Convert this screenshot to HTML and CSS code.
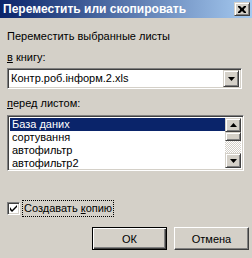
FILE: index.html
```html
<!DOCTYPE html>
<html lang="ru">
<head>
  <meta charset="UTF-8">
  <title>Переместить или скопировать</title>
  <link rel="stylesheet" href="styles.css">
</head>
<body>
  <div class="window">
    <div class="titlebar">
      <span class="title">Переместить или скопировать</span>
      <span class="close raised">
        <svg width="8" height="7" viewBox="0 0 8 7"><path d="M0 0h2l2 2 2-2h2v1l-2 2v1l2 2v1h-2l-2-2-2 2h-2v-1l2-2v-1l-2-2z" fill="#000"/></svg>
      </span>
    </div>
    <div class="content">
      <div class="caption">Переместить выбранные листы</div>
      <div class="label"><u>в</u> книгу:</div>
      <div class="combo sunken">
        <span class="combo-value">Контр.роб.інформ.2.xls</span>
        <span class="arrow-btn raised">
          <svg width="7" height="4" viewBox="0 0 7 4"><path d="M0 0h7L3.5 4z" fill="#000"/></svg>
        </span>
      </div>
      <div class="label"><u>п</u>еред листом:</div>
      <div class="list sunken">
        <ul class="items">
          <li class="selected">База даних</li>
          <li>сортування</li>
          <li>автофильтр</li>
          <li>автофильтр2</li>
        </ul>
        <div class="scrollbar">
          <span class="arrow-btn raised up">
            <svg width="7" height="4" viewBox="0 0 7 4"><path d="M0 4h7L3.5 0z" fill="#000"/></svg>
          </span>
          <span class="thumb raised"></span>
          <span class="track"></span>
          <span class="arrow-btn raised down">
            <svg width="7" height="4" viewBox="0 0 7 4"><path d="M0 0h7L3.5 4z" fill="#000"/></svg>
          </span>
        </div>
      </div>
      <div class="check-row">
        <span class="checkbox sunken">
          <svg width="7" height="7" viewBox="0 0 7 7"><path d="M0 2v3l2 2 5-5V0L2 5z" fill="#000"/></svg>
        </span>
        <span class="check-label">Создавать <u>к</u>опию</span>
      </div>
      <div class="buttons">
        <button class="btn default">ОК</button>
        <button class="btn">Отмена</button>
      </div>
    </div>
  </div>
</body>
</html>
```

FILE: styles.css
```css
/* classic dialog look */
body { margin: 0; background: #d4d0c8; font-family: "Liberation Sans", Arial, sans-serif; font-size: 11px; color: #000; }
.window { width: 252px; height: 258px; background: #d4d0c8; overflow: hidden; display: flex; flex-direction: column; }

.titlebar { flex: none; height: 18px; display: flex; align-items: center; justify-content: space-between; padding: 0 2px 0 3px; background: linear-gradient(to right, #0a246a, #a6caf0); }
.title { color: #fff; font-weight: bold; font-size: 12px; white-space: nowrap; }
.close { width: 16px; height: 14px; display: flex; align-items: center; justify-content: center; background: #d4d0c8; box-sizing: border-box; }

.raised { border: 1px solid; border-color: #d4d0c8 #404040 #404040 #d4d0c8; box-shadow: inset 1px 1px #fff, inset -1px -1px #808080; background: #d4d0c8; box-sizing: border-box; }
.sunken { border: 1px solid; border-color: #808080 #fff #fff #808080; box-shadow: inset 1px 1px #404040, inset -1px -1px #d4d0c8; background: #fff; box-sizing: border-box; }

.content { flex: 1; display: flex; flex-direction: column; align-items: flex-start; padding: 0 0 8px 7px; }
.caption { margin-top: 12px; line-height: 13px; }
.label { margin-top: 8px; line-height: 13px; }

.combo { flex: none; margin-top: 4px; width: 235px; height: 21px; display: flex; align-items: center; justify-content: space-between; padding: 2px; }
.combo-value { padding-left: 1px; line-height: 13px; }
.combo .arrow-btn { width: 16px; height: 17px; }

.arrow-btn { display: flex; align-items: center; justify-content: center; }

.list { flex: none; margin-top: 5px; width: 237px; height: 56px; display: flex; padding: 2px; }
.items { list-style: none; margin: 0; padding: 0; flex: 1; }
.items li { height: 13px; line-height: 13px; padding-left: 2px; }
.items .selected { background: #0a246a; color: #fff; }

.scrollbar { width: 16px; display: flex; flex-direction: column; }
.scrollbar .up { height: 14px; }
.scrollbar .thumb { height: 9px; }
.scrollbar .track { flex: 1; background-color: #fff; background-image: linear-gradient(45deg, #d4d0c8 25%, transparent 25%, transparent 75%, #d4d0c8 75%), linear-gradient(45deg, #d4d0c8 25%, transparent 25%, transparent 75%, #d4d0c8 75%); background-size: 2px 2px; background-position: 0 0, 1px 1px; }
.scrollbar .down { height: 15px; }

.check-row { flex: none; margin-top: auto; display: flex; align-items: center; gap: 2px; }
.checkbox { width: 13px; height: 13px; display: flex; align-items: center; justify-content: center; }
.check-label { border: 1px dotted #000; padding: 1px; line-height: 13px; }

.buttons { flex: none; align-self: stretch; margin-top: 10px; display: flex; justify-content: flex-end; gap: 7px; padding-right: 3px; }
.btn { width: 75px; height: 23px; font: inherit; color: #000; padding: 0; border: 1px solid; border-color: #fff #404040 #404040 #fff; box-shadow: inset -1px -1px #808080; background: #d4d0c8; box-sizing: border-box; }
.btn.default { border-color: #000; box-shadow: inset 1px 1px #fff, inset -1px -1px #404040, inset -2px -2px #808080; }
```
